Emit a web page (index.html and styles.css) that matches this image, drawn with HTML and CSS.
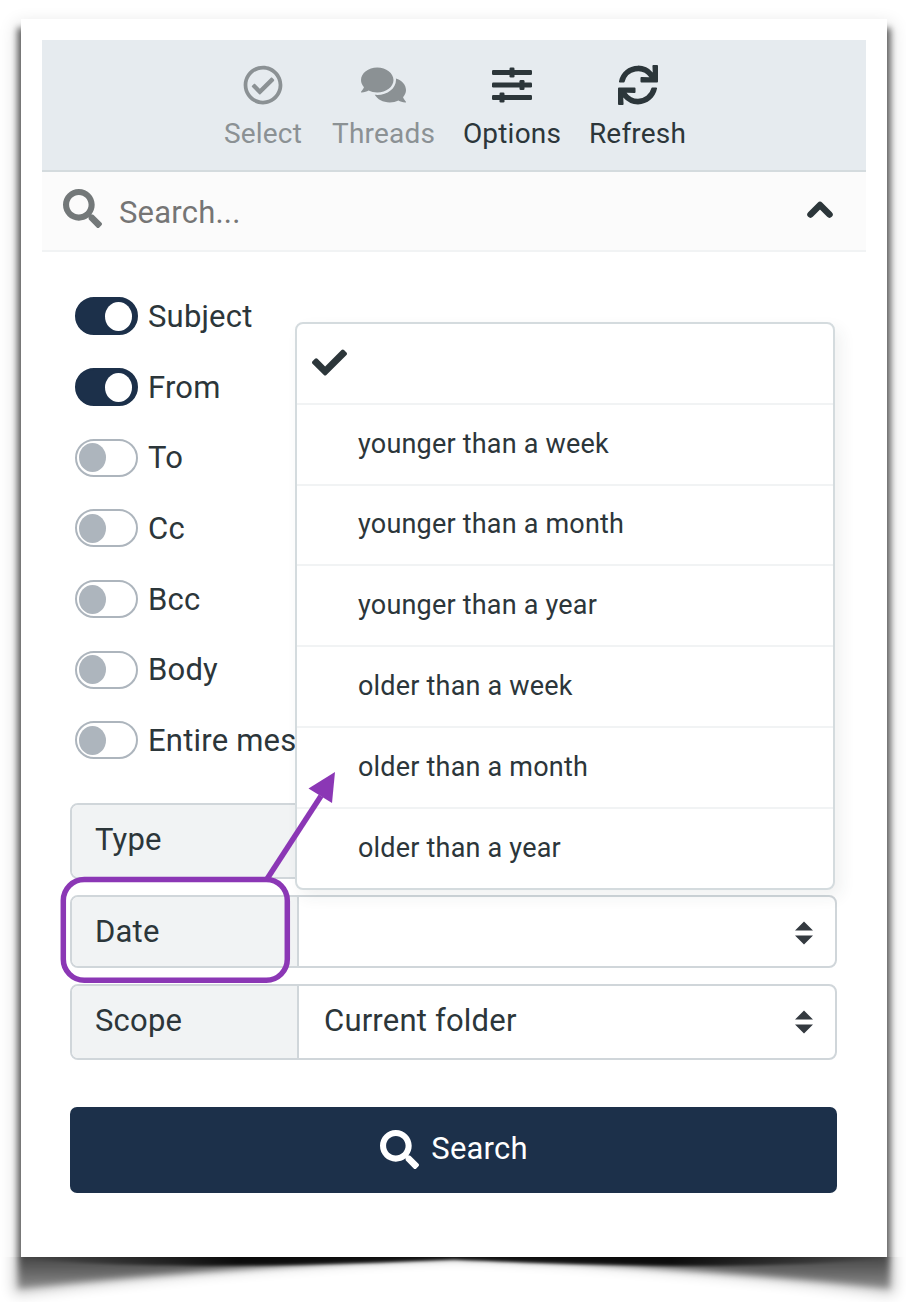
FILE: index.html
```html
<!DOCTYPE html>
<html lang="en">
<head>
<meta charset="utf-8">
<title>Mail search options</title>
<link rel="stylesheet" href="styles.css">
</head>
<body>
<svg class="shadow" width="906" height="1302" viewBox="0 0 906 1302" aria-hidden="true">
  <defs>
    <filter id="soft" x="-10%" y="-10%" width="120%" height="120%"><feGaussianBlur stdDeviation="9"/></filter>
    <filter id="tight" x="-10%" y="-10%" width="120%" height="120%"><feGaussianBlur stdDeviation="3.4"/></filter>
    <filter id="curl" x="-10%" y="-50%" width="120%" height="220%"><feGaussianBlur stdDeviation="3 3.2"/></filter>
    <filter id="line" x="-10%" y="-50%" width="120%" height="220%"><feGaussianBlur stdDeviation="2 1.8"/></filter>
    <filter id="haze" x="-10%" y="-50%" width="120%" height="220%"><feGaussianBlur stdDeviation="7"/></filter>
    <clipPath id="above"><rect width="906" height="1257"/></clipPath>
    <clipPath id="below"><rect y="1257" width="906" height="45"/></clipPath>
    <linearGradient id="fade" x1="0" y1="1255" x2="0" y2="1290" gradientUnits="userSpaceOnUse">
      <stop offset="0" stop-color="#000" stop-opacity=".66"/>
      <stop offset="1" stop-color="#000" stop-opacity=".27"/>
    </linearGradient>
    <linearGradient id="mid" x1="21" y1="0" x2="887" y2="0" gradientUnits="userSpaceOnUse">
      <stop offset="0" stop-color="#000" stop-opacity="0"/>
      <stop offset=".25" stop-color="#000" stop-opacity=".85"/>
      <stop offset=".75" stop-color="#000" stop-opacity=".85"/>
      <stop offset="1" stop-color="#000" stop-opacity="0"/>
    </linearGradient>
  </defs>
  <g clip-path="url(#above)">
    <rect x="16" y="24" width="876" height="1300" opacity=".14" filter="url(#soft)"/>
    <rect x="17.500" y="28" width="873" height="1300" opacity=".58" filter="url(#tight)"/>
  </g>
  <g clip-path="url(#below)">
    <path d="M14 1200H894V1294Q660 1264 454 1257Q248 1264 14 1294Z" opacity=".24" filter="url(#haze)"/>
    <path d="M18 1200H890V1289Q660 1264 454 1258Q248 1264 18 1289Z" fill="url(#fade)" filter="url(#curl)"/>
    <path d="M21 1240H887V1258C780 1270 600 1266 454 1259.500C308 1266 128 1270 21 1258Z" fill="url(#mid)" filter="url(#line)"/>
  </g>
</svg>
<main class="sheet">
  <header class="toolbar">
    <a class="tool tool-select disabled"><svg class="icon" viewBox="0 0 512 512"><path d="M256 8C119.033 8 8 119.033 8 256s111.033 248 248 248 248-111.033 248-248S392.967 8 256 8zm0 48c110.532 0 200 89.451 200 200 0 110.532-89.451 200-200 200-110.532 0-200-89.451-200-200 0-110.532 89.451-200 200-200m140.204 130.267l-22.536-22.718c-4.667-4.705-12.265-4.736-16.97-.068L215.346 303.697l-59.792-60.277c-4.667-4.705-12.265-4.736-16.97-.069l-22.719 22.536c-4.705 4.667-4.736 12.265-.068 16.971l90.781 91.516c4.667 4.705 12.265 4.736 16.97.068l172.589-171.204c4.704-4.668 4.734-12.266.067-16.971z"/></svg><span>Select</span></a>
    <a class="tool tool-threads disabled"><svg class="icon wide" viewBox="0 0 576 512"><path d="M416 192c0-88.4-93.1-160-208-160S0 103.6 0 192c0 34.3 14.1 65.9 38 92-13.4 30.2-35.5 54.2-35.8 54.5-2.2 2.3-2.8 5.7-1.5 8.7S4.8 352 8 352c36.6 0 66.9-12.3 88.7-25 32.2 15.7 70.3 25 111.3 25 114.9 0 208-71.6 208-160zm122 220c23.9-26 38-57.7 38-92 0-66.9-53.5-124.2-129.3-148.1.9 6.6 1.3 13.3 1.3 20.1 0 105.9-107.7 192-240 192-10.8 0-21.3-.8-31.7-1.9C207.8 439.6 281.8 480 368 480c41 0 79.1-9.2 111.3-25 21.8 12.7 52.1 25 88.7 25 3.2 0 6.1-1.9 7.3-4.8 1.3-2.9.7-6.3-1.5-8.7-.3-.3-22.4-24.2-35.8-54.5z"/></svg><span>Threads</span></a>
    <a class="tool tool-options"><svg class="icon" viewBox="0 0 512 512"><rect y="64" width="512" height="64" rx="16"/><rect y="224" width="512" height="64" rx="16"/><rect y="384" width="512" height="64" rx="16"/><rect x="224" y="32" width="64" height="128" rx="16"/><rect x="352" y="192" width="64" height="128" rx="16"/><rect x="96" y="352" width="64" height="128" rx="16"/></svg><span>Options</span></a>
    <a class="tool tool-refresh"><svg class="icon" viewBox="0 0 512 512"><path d="M440.65 12.57l4 82.77A247.16 247.16 0 0 0 255.83 8C134.73 8 33.91 94.92 12.29 209.82A12 12 0 0 0 24.09 224h49.05a12 12 0 0 0 11.67-9.26 175.91 175.91 0 0 1 317-56.94l-101.46-4.86a12 12 0 0 0-12.57 12v47.41a12 12 0 0 0 12 12H500a12 12 0 0 0 12-12V12a12 12 0 0 0-12-12h-47.37a12 12 0 0 0-11.98 12.57zM255.83 432a175.61 175.61 0 0 1-146-77.8l101.8 4.87a12 12 0 0 0 12.57-12v-47.4a12 12 0 0 0-12-12H12a12 12 0 0 0-12 12V500a12 12 0 0 0 12 12h47.35a12 12 0 0 0 12-12.6l-4.15-82.57A247.17 247.17 0 0 0 255.83 504c121.11 0 221.93-86.92 243.55-201.82a12 12 0 0 0-11.8-14.18h-49.05a12 12 0 0 0-11.67 9.26A175.86 175.86 0 0 1 255.83 432z"/></svg><span>Refresh</span></a>
  </header>
  <div class="searchbar">
    <svg class="glass" viewBox="0 0 512 512"><path d="M505 442.7L405.3 343c-4.5-4.5-10.6-7-17-7H372c27.6-35.3 44-79.7 44-128C416 93.1 322.9 0 208 0S0 93.1 0 208s93.1 208 208 208c48.3 0 92.7-16.4 128-44v16.3c0 6.4 2.5 12.5 7 17l99.7 99.7c9.4 9.4 24.6 9.4 33.9 0l28.3-28.3c9.4-9.4 9.4-24.6.1-34zM208 336c-70.7 0-128-57.2-128-128 0-70.7 57.2-128 128-128 70.7 0 128 57.2 128 128 0 70.7-57.2 128-128 128z"/></svg>
    <span class="placeholder">Search...</span>
    <svg class="chevron" width="26" height="18" viewBox="0 0 26 18"><path d="M3.500 13.500L13 4l9.500 9.500"/></svg>
  </div>
  <form class="options">
    <div class="switches">
      <label class="switch on"><i></i><span>Subject</span></label>
      <label class="switch on"><i></i><span>From</span></label>
      <label class="switch"><i></i><span>To</span></label>
      <label class="switch"><i></i><span>Cc</span></label>
      <label class="switch"><i></i><span>Bcc</span></label>
      <label class="switch"><i></i><span>Body</span></label>
      <label class="switch"><i></i><span>Entire message</span></label>
    </div>
    <div class="fields">
      <div class="field type"><span class="name">Type</span><span class="value"></span></div>
      <div class="field date"><span class="name">Date</span><span class="value"><svg class="sort" viewBox="0 0 18 24"><path d="M0 9.500L9 .5l9 9zM0 14.500h18l-9 9z"/></svg></span></div>
      <div class="field"><span class="name">Scope</span><span class="value">Current folder<svg class="sort" viewBox="0 0 18 24"><path d="M0 9.500L9 .5l9 9zM0 14.500h18l-9 9z"/></svg></span></div>
    </div>
    <div class="submit">
      <svg class="glass" viewBox="0 0 512 512"><path d="M505 442.7L405.3 343c-4.5-4.5-10.6-7-17-7H372c27.6-35.3 44-79.7 44-128C416 93.1 322.9 0 208 0S0 93.1 0 208s93.1 208 208 208c48.3 0 92.7-16.4 128-44v16.3c0 6.4 2.5 12.5 7 17l99.7 99.7c9.4 9.4 24.6 9.4 33.9 0l28.3-28.3c9.4-9.4 9.4-24.6.1-34zM208 336c-70.7 0-128-57.2-128-128 0-70.7 57.2-128 128-128 70.7 0 128 57.2 128 128 0 70.7-57.2 128-128 128z"/></svg>
      <span>Search</span>
    </div>
  </form>
</main>
<ul class="menu">
  <li class="checked"><svg class="check" viewBox="0 0 512 512"><path d="M173.898 439.404l-166.4-166.4c-9.997-9.997-9.997-26.206 0-36.204l36.203-36.204c9.997-9.998 26.207-9.998 36.204 0L192 312.690 432.095 72.596c9.997-9.997 26.207-9.997 36.204 0l36.203 36.204c9.997 9.997 9.997 26.206 0 36.204l-294.400 294.401c-9.998 9.997-26.207 9.997-36.204-.001z"/></svg></li>
  <li>younger than a week</li>
  <li>younger than a month</li>
  <li>younger than a year</li>
  <li>older than a week</li>
  <li>older than a month</li>
  <li>older than a year</li>
</ul>
<svg class="annotation" width="906" height="1302" viewBox="0 0 906 1302" aria-hidden="true">
  <rect x="63.300" y="879.500" width="224" height="100.800" rx="21"/>
  <path d="M267 879L321 796"/>
  <path class="head" d="M335 772L308.500 788.500L332 803Z"/>
</svg>
</body>
</html>
```
FILE: styles.css
```css
* { box-sizing: border-box; }
body {
  margin: 0;
  width: 906px;
  height: 1302px;
  overflow: hidden;
  position: relative;
  background: #fff;
  color: #2c363a;
  font-family: Roboto, sans-serif;
  font-size: 31px;
  letter-spacing: .2px;
}
svg { display: block; flex: none; fill: currentColor; }
.shadow { position: absolute; left: 0; top: 0; fill: #000; }
.sheet {
  position: relative;
  width: 866px;
  height: 1238px;
  margin: 19px 0 0 21px;
  padding: 21px;
  background: #fff;
}
.toolbar {
  display: flex;
  height: 132px;
  padding: 25px 0 0 182px;
  background: #e6ebef;
  border-bottom: 2px solid #d4dbde;
  font-size: 28px;
}
.tool { display: flex; flex-direction: column; align-items: center; gap: 12px; line-height: 33px; white-space: nowrap; }
.tool.disabled { color: #8b9194; }
.tool-select { width: 78px; margin-right: 30px; }
.tool-threads { width: 103px; margin-right: 28px; }
.tool-options { width: 98px; margin-right: 28px; }
.tool-refresh { width: 97px; }
.icon { width: 40px; height: 40px; }
.icon.wide { width: 45px; }
.searchbar {
  display: flex;
  align-items: center;
  height: 80px;
  padding: 0 33px 0 21px;
  background: #fbfbfb;
  border-bottom: 2px solid #f1f3f4;
}
.glass { width: 39px; height: 39px; }
.searchbar .glass { color: #737879; margin-top: -5px; }
.placeholder { margin: 3px 0 0 17px; color: #757575; }
.chevron { margin: -3px 0 0 auto; fill: none; stroke: #2c363a; stroke-width: 6.500; stroke-linecap: round; stroke-linejoin: round; }
.options { padding: 29px 29px 0 28px; }
.switches { display: grid; grid-auto-rows: 70.700px; padding-left: 5px; width: 240px; }
.switch { display: flex; align-items: center; gap: 10px; white-space: nowrap; }
.switch i {
  display: flex;
  align-items: center;
  flex: none;
  width: 63px;
  height: 38px;
  padding: 2px;
  border: 2px solid #adb5bd;
  border-radius: 19px;
}
.switch i::before { content: ""; width: 27px; height: 29px; border-radius: 50%; background: #adb5bd; }
.switch.on i { justify-content: flex-end; padding-right: 4px; background: #1c304a; border-color: #1c304a; }
.switch.on i::before { background: #fff; }
.fields { display: grid; grid-template-rows: 76px 73px 76px; gap: 16.300px; margin-top: 26.700px; }
.field { display: flex; border: 2px solid #d0d6da; border-radius: 8px; background: #fff; overflow: hidden; }
.field.type { width: 740px; }
.name { display: flex; align-items: center; width: 227px; padding: 0 0 3px 23px; background: #f1f3f4; border-right: 2px solid #d0d6da; }
.value { display: flex; align-items: center; flex: 1; padding: 0 22px 3px 25px; }
.date .name, .date .value { padding-bottom: 0; }
.sort { width: 18px; height: 24px; margin: 3px 0 0 auto; color: #343a40; }
.submit {
  display: flex;
  align-items: center;
  justify-content: center;
  gap: 12px;
  height: 86px;
  margin-top: 47px;
  padding: 0 0 3px 1px;
  border-radius: 7px;
  background: #1c304a;
  color: #fff;
}
.submit .glass { margin-top: 2px; }
.menu {
  position: absolute;
  left: 295px;
  top: 322px;
  width: 540px;
  height: 568px;
  margin: 0;
  padding: 0;
  display: grid;
  grid-template-rows: repeat(6, 80.800px) 1fr;
  list-style: none;
  background: #fff;
  border: 2px solid #d4dbde;
  border-radius: 8px;
  box-shadow: 6px 7px 16px rgba(44, 54, 58, .07);
  font-size: 27px;
}
.menu li { display: flex; align-items: center; padding: 0 0 1px 61px; border-bottom: 2px solid #f1f3f4; }
.menu li:last-child { border: 0; }
.menu li.checked { padding-left: 15px; }
.check { width: 35px; height: 35px; }
.annotation { position: absolute; left: 0; top: 0; fill: none; stroke: #8b37b5; stroke-width: 5.500; }
.annotation .head { fill: #8b37b5; stroke: none; }
```
